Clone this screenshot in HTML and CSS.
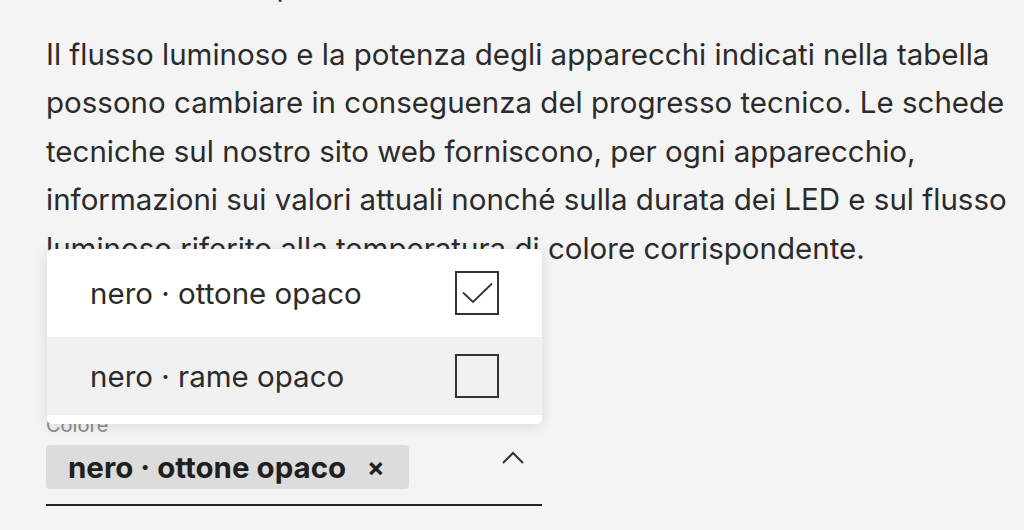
FILE: index.html
```html
<!DOCTYPE html>
<html lang="it">
<head>
    <meta charset="UTF-8">
    <meta name="viewport" content="width=device-width, initial-scale=1.0">
    <title>Colore</title>
    <link rel="stylesheet" href="styles.css">
</head>
<body>
    <p class="lead">Nota: i dati sulla potenza</p>

    <p class="note">Il flusso luminoso e la potenza degli apparecchi indicati nella tabella possono cambiare in conseguenza del progresso tecnico. Le schede tecniche sul nostro sito web forniscono, per ogni apparecchio, informazioni sui valori attuali nonché sulla durata dei LED e sul flusso luminoso riferito alla temperatura di colore corrispondente.</p>

    <div class="field">
        <ul class="options">
            <li class="option">
                <span>nero · ottone opaco</span>
                <span class="check is-checked">
                    <svg width="32" height="22" viewBox="0 0 32 22"><path d="M2 10.5 L12 20 L31 1.5" fill="none" stroke="#333" stroke-width="1.8"/></svg>
                </span>
            </li>
            <li class="option is-active">
                <span>nero · rame opaco</span>
                <span class="check"></span>
            </li>
        </ul>

        <label class="field-label">Colore</label>
        <div class="control">
            <span class="chip">nero · ottone opaco <span class="chip-x">×</span></span>
            <svg class="chevron" width="22" height="14" viewBox="0 0 22 14"><path d="M1 12 L11 2 L21 12" fill="none" stroke="#333" stroke-width="2"/></svg>
        </div>
    </div>
</body>
</html>
```

FILE: styles.css
```css
body {
    margin: 0;
    padding: 0 0 0 46px;
    background-color: #f4f4f4;
    color: #2b2b2b;
    font-family: Inter, "Noto Sans", sans-serif;
    font-size: 29.5px;
    line-height: 48.5px;
}

p {
    margin: 0;
}

.lead {
    margin-top: -39px;
}

.note {
    margin-top: 20px;
    width: 970px;
}

.field {
    position: relative;
    width: 496px;
    margin-top: 141px;
    border-bottom: 2px solid #262626;
}

.field-label {
    display: block;
    font-size: 20px;
    line-height: 24px;
    color: #8c8c8c;
}

.control {
    display: flex;
    justify-content: space-between;
    align-items: flex-start;
    padding: 8px 0 15px;
    line-height: 45px;
}

.chip {
    display: inline-flex;
    align-items: center;
    gap: 21px;
    height: 44px;
    padding: 0 24px 0 22px;
    border-radius: 4px;
    background-color: #dcdcdc;
    font-size: 29.5px;
    font-weight: 700;
    color: #1f1f1f;
}

.chip-x {
    font-size: 26px;
}

.chevron {
    margin: 6px 18px 0 0;
}

.options {
    position: absolute;
    left: 1px;
    right: 0;
    bottom: 80px;
    margin: 0;
    padding: 0 0 9px;
    list-style: none;
    background-color: #fff;
    border-radius: 5px;
    box-shadow: 0 2px 14px rgba(0, 0, 0, 0.12);
}

.option {
    display: flex;
    justify-content: space-between;
    align-items: center;
    height: 88px;
    padding: 0 43px 0 43px;
}

.option + .option {
    height: 78px;
}

.option.is-active {
    background-color: #f1f1f1;
}

.check {
    display: flex;
    align-items: center;
    justify-content: center;
    width: 40px;
    height: 40px;
    border: 2px solid #333;
}
```
